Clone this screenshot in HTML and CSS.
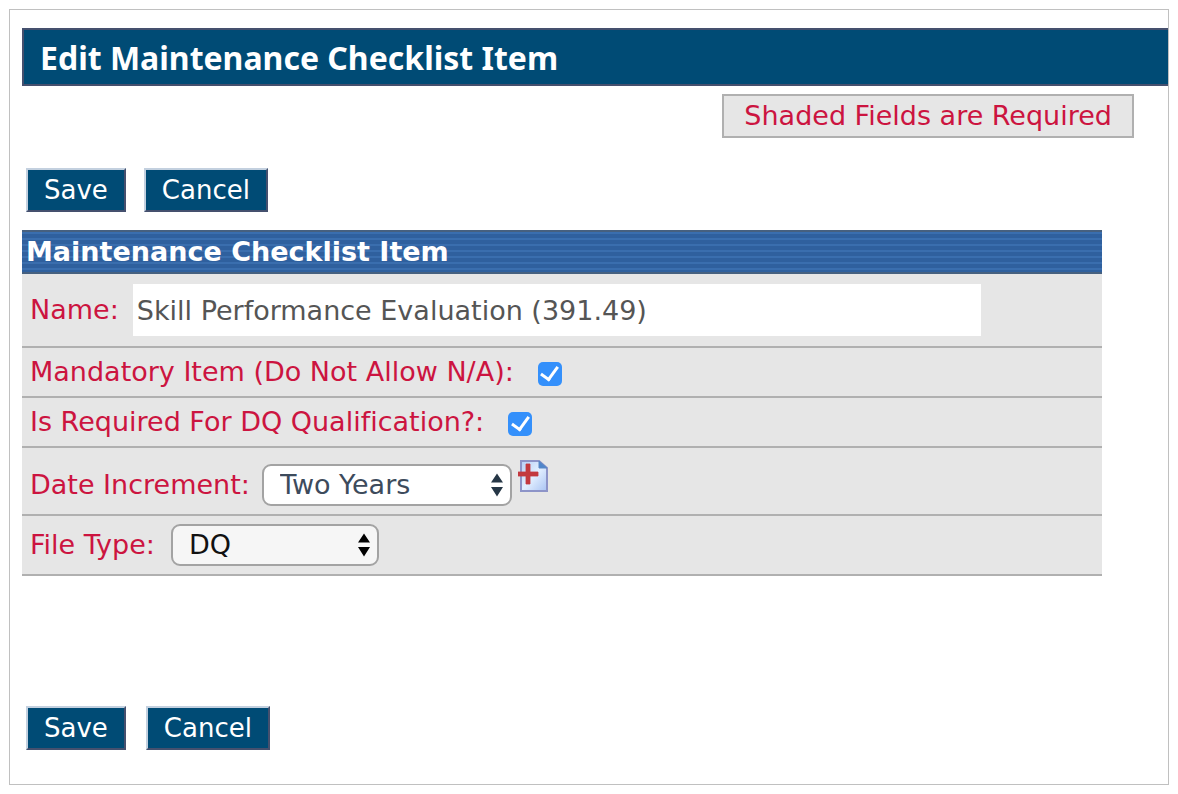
FILE: index.html
```html
<!DOCTYPE html>
<html lang="en">
<head>
    <meta charset="UTF-8">
    <meta name="viewport" content="width=device-width, initial-scale=1.0">
    <title>Edit Maintenance Checklist Item</title>
    <link rel="stylesheet" href="styles.css">
</head>
<body>
    <form class="page">
        <h1 class="page-title">Edit Maintenance Checklist Item</h1>
        <div class="notice">Shaded Fields are Required</div>

        <div class="buttons">
            <button type="submit" class="btn">Save</button>
            <button type="button" class="btn">Cancel</button>
        </div>

        <section class="details">
            <h2 class="details-title">Maintenance Checklist Item</h2>
            <div class="row row-name">
                <label for="name">Name:</label>
                <input type="text" id="name" class="text-box" value="Skill Performance Evaluation (391.49)">
            </div>
            <div class="row row-check">
                <label for="mandatory">Mandatory Item (Do Not Allow N/A):</label>
                <input type="checkbox" id="mandatory" class="check" checked>
            </div>
            <div class="row row-check">
                <label for="required">Is Required For DQ Qualification?:</label>
                <input type="checkbox" id="required" class="check" checked>
            </div>
            <div class="row row-date">
                <label for="increment">Date Increment:</label>
                <div class="select-wrap">
                    <select id="increment" class="select select-increment">
                        <option>Two Years</option>
                    </select>
                    <svg class="arrows arrows-slate" width="12" height="24" viewBox="0 0 12 24">
                        <path d="M6 0.5L12 9.5H0zM0 14H12L6 23.5z"/>
                    </svg>
                </div>
                <button type="button" class="add" aria-label="Add date increment">
                    <svg width="30" height="32" viewBox="0 0 30 32">
                        <defs>
                            <linearGradient id="paper" x1="0" y1="0" x2="1" y2="1">
                                <stop offset="0" stop-color="#b5cef6"/>
                                <stop offset="0.5" stop-color="#e2efff"/>
                                <stop offset="1" stop-color="#a9c3f3"/>
                            </linearGradient>
                        </defs>
                        <path d="M3 1H21L29 8V31H3z" fill="url(#paper)" stroke="#8d94c8" stroke-width="2"/>
                        <path d="M21 1L29 8H21z" fill="#4f86cb" stroke="#5d88c5"/>
                        <path d="M8 4h4v8h8v4h-8v8H8v-8H0v-4h8z" fill="#c3393f" stroke="#c3393f" stroke-width="0.8"/>
                    </svg>
                </button>
            </div>
            <div class="row row-file">
                <label for="filetype">File Type:</label>
                <div class="select-wrap">
                    <select id="filetype" class="select select-file">
                        <option>DQ</option>
                    </select>
                    <svg class="arrows" width="12" height="24" viewBox="0 0 12 24">
                        <path d="M6 0.5L12 9.5H0zM0 14H12L6 23.5z"/>
                    </svg>
                </div>
            </div>
        </section>

        <div class="buttons buttons-bottom">
            <button type="submit" class="btn">Save</button>
            <button type="button" class="btn">Cancel</button>
        </div>
    </form>
</body>
</html>
```

FILE: styles.css
```css
* { box-sizing: border-box; }
body { margin: 9px; background: #fff; font-family: Verdana, "DejaVu Sans", sans-serif; font-size: 27px; line-height: 32px; font-variant-ligatures: none; }
h1, h2 { margin: 0; }
input, select, button { font: inherit; margin: 0; }

.page { display: flow-root; padding: 18px 0 34px 12px; border: 1px solid #c0c0c0; outline: 2px solid #ececec; background: #fff; }
.page-title { padding: 11px 16px 9px; border: 2px solid #45506e; border-right: 0; background: #004b75; color: #fff; font-family: "Noto Sans", sans-serif; font-size: 32px; font-weight: 700; line-height: 34px; }
.notice { width: fit-content; margin: 8px 34px 0 auto; padding: 4px 20px; border: 2px solid #b0b0b0; background: #e6e6e6; color: #cc1440; }

.buttons { display: flex; gap: 18px; margin: 30px 0 18px 4px; }
.buttons-bottom { gap: 20px; margin: 130px 0 0 4px; }
.btn { padding: 4px 16px; border: 2px solid; border-color: #c3d0df #45506e #45506e #c3d0df; background: #004b75; color: #fff; font-size: 26px; }

.details { margin-right: 66px; background: #e6e6e6; color: #cc1440; }
.details-title { padding: 4px; border: solid #46607f; border-width: 2px 0; background: repeating-linear-gradient(#3a6eae 0 2px, #2f609e 2px 6px); color: #fff; font-size: 27px; font-weight: 700; line-height: 32px; }
.row { display: flex; align-items: center; padding: 8px; border-bottom: 2px solid #b0b0b0; }
.row-name { gap: 14px; padding: 10px 8px; }
.row-check { gap: 24px; }
.row-date { gap: 12px; padding-top: 16px; }
.row-file { gap: 16px; }

.text-box { flex: 0 1 848px; min-width: 0; height: 52px; padding: 0 4px; border: 0; background: #fff; color: #555; }
.check { appearance: none; display: grid; place-items: center; width: 24px; height: 24px; margin-top: 3px; border-radius: 5px; background: #3490fb; }
.check:checked::after { content: ""; width: 8px; height: 14px; margin-bottom: 4px; border: solid #fff; border-width: 0 3px 3px 0; transform: rotate(36deg); }

.select-wrap { position: relative; }
.select { appearance: none; display: block; height: 42px; padding: 0 16px; border: 2px solid #a3a3a3; border-radius: 9px; }
.select-increment { width: 250px; background: #fff; color: #3d4b5c; }
.select-file { width: 208px; background: #f6f6f6; color: #111; }
.arrows { position: absolute; top: 9px; right: 9px; pointer-events: none; }
.arrows-slate { fill: #263746; }
.add { align-self: flex-start; display: flex; margin: -4px 0 0 -6px; padding: 0; border: 0; background: none; }
```
